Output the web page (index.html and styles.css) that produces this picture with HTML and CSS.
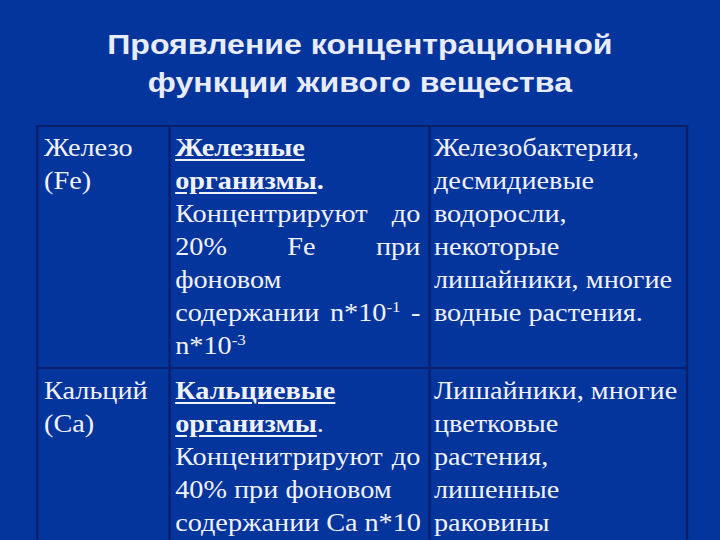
FILE: index.html
```html
<!DOCTYPE html>
<html lang="ru">
<head>
<meta charset="utf-8">
<link rel="stylesheet" href="styles.css">
</head>
<body>
<div class="slide">
  <div class="stage">
    <h1 class="title">Проявление концентрационной<br>функции живого вещества</h1>
    <table class="grid">
      <colgroup>
        <col class="c1"><col class="c2"><col class="c3">
      </colgroup>
      <tr class="r1">
        <td>Железо<br>(Fe)</td>
        <td>
          <div><b class="u">Железные</b></div>
          <div><b class="u">организмы</b><b>.</b></div>
          <div class="jl"><span>Концентрируют</span><span>до</span></div>
          <div class="jl"><span>20%</span><span>Fe</span><span>при</span></div>
          <div>фоновом</div>
          <div class="jl"><span>содержании</span><span>n*10<sup>-1</sup></span><span>-</span></div>
          <div>n*10<sup>-3</sup></div>
        </td>
        <td>Железобактерии,<br>десмидиевые<br>водоросли,<br>некоторые<br>лишайники, многие<br>водные растения.</td>
      </tr>
      <tr class="r2">
        <td>Кальций<br>(Ca)</td>
        <td>
          <div><b class="u">Кальциевые</b></div>
          <div><b class="u">организмы</b>.</div>
          <div class="jl"><span>Конценитрируют</span><span>до</span></div>
          <div>40% при фоновом</div>
          <div class="jl"><span>содержании</span><span>Ca</span><span>n*10</span></div>
        </td>
        <td>Лишайники, многие<br>цветковые<br>растения,<br>лишенные<br>раковины</td>
      </tr>
    </table>
  </div>
</div>
</body>
</html>
```

FILE: styles.css
```css
html, body {
  margin: 0;
  padding: 0;
  background: #04359d;
}
.slide {
  width: 720px;
  height: 540px;
  overflow: hidden;
  background: #04359d;
  color: #eef0f8;
}
.stage {
  width: 637px;
  transform: scaleX(1.13);
  transform-origin: 0 0;
}
.title {
  margin: 0;
  padding-top: 25px;
  height: 96px;
  box-sizing: border-box;
  text-align: center;
  font-family: "Liberation Sans", Arial, sans-serif;
  font-weight: bold;
  font-size: 28.4px;
  line-height: 38px;
  color: #e8ecf8;
}
.grid {
  margin: 29px 0 0 32px;
  width: 575px;
  border-collapse: collapse;
  table-layout: fixed;
  font-family: "Liberation Serif", "Times New Roman", serif;
  font-size: 25px;
  line-height: 33px;
  color: #f0f2fa;
}
.c1 { width: 117px; }
.c2 { width: 230px; }
.c3 { width: 228px; }
.grid td {
  border: 2px solid #0b1f6a;
  vertical-align: top;
  padding: 4px 6px 5px 5px;
  white-space: nowrap;
}
.grid td:nth-child(2) { padding-left: 4px; padding-right: 7px; }
.grid td:nth-child(3) { padding-left: 3px; padding-right: 4px; }
.jl {
  display: flex;
  justify-content: space-between;
  gap: 6px;
}
.u {
  text-decoration: underline;
  text-decoration-thickness: 2px;
  text-underline-offset: 3px;
}
sup {
  font-size: 15px;
  line-height: 0;
  vertical-align: 9px;
}
.r2 td { padding-top: 5px; }
```
